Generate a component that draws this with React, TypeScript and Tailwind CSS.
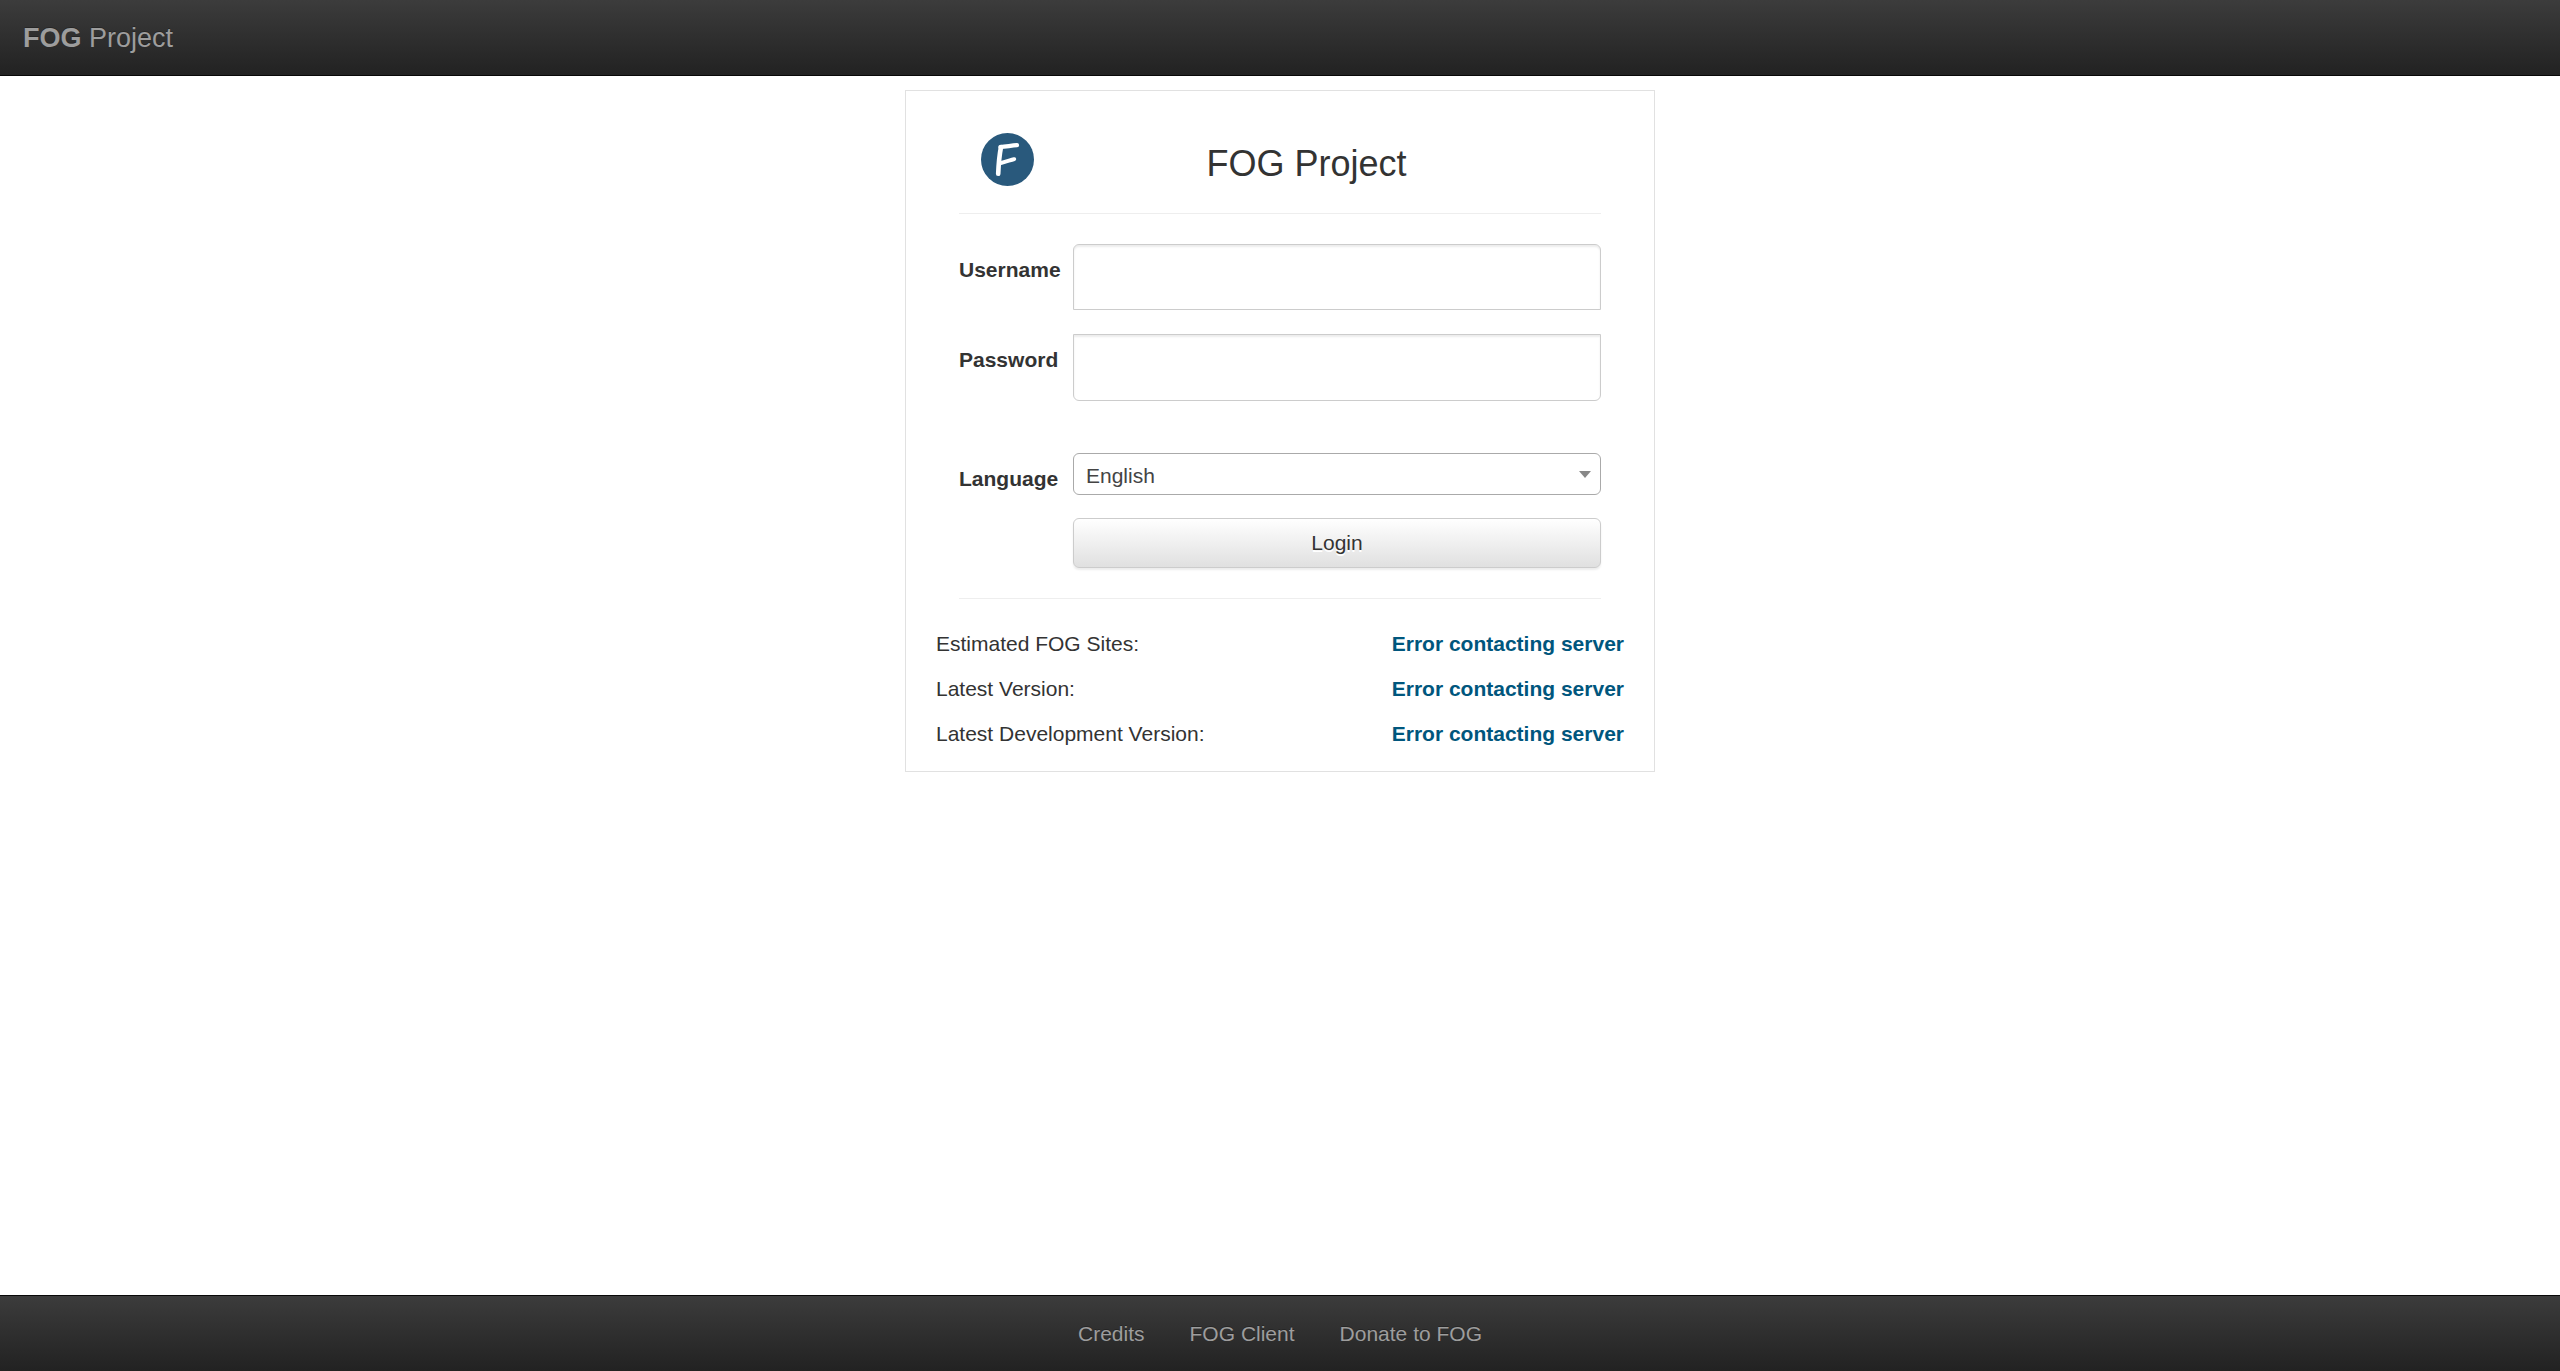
import type { ReactNode } from "react";

const fieldBase =
  "block w-full border border-[#cccccc] bg-white px-[18px] text-[21px] text-[#555555] shadow-[inset_0_2px_2px_rgba(0,0,0,0.075)] outline-none focus:border-[#66afe9]";

const footerLinks = ["Credits", "FOG Client", "Donate to FOG"];

const statuses = ["Estimated FOG Sites:", "Latest Version:", "Latest Development Version:"];

function Logo() {
  return (
    <svg className="size-[53px] shrink-0" viewBox="0 0 53 53" role="img" aria-label="FOG logo">
      <circle cx="26.5" cy="26.5" r="26.5" fill="#29597c" />
      <g fill="none" stroke="#ffffff" strokeLinecap="round" strokeLinejoin="round">
        <path d="M20 14C18.8 20 17.6 31 17.2 40.8" strokeWidth="4.6" />
        <path d="M19.4 14C25 13.6 30 12.6 36 12.1" strokeWidth="4.2" />
        <path d="M19.5 30.2C24 28.6 29 27.5 33.2 26.2" strokeWidth="4" />
      </g>
    </svg>
  );
}

function FormRow({ id, label, children }: { id: string; label: string; children: ReactNode }) {
  return (
    <div className="grid grid-cols-[114px_1fr] items-start">
      <label htmlFor={id} className="pt-[11px] font-bold">
        {label}
      </label>
      {children}
    </div>
  );
}

export default function App() {
  return (
    <div className="flex min-h-screen flex-col bg-white font-['Liberation_Sans',Arial,sans-serif] text-[21px] leading-[30px] text-[#333333]">
      <header className="flex h-[76px] items-center border-b border-[#080808] bg-linear-to-b from-[#3c3c3c] to-[#222222] px-[23px]">
        <a href="#" className="text-[27px] text-[#9d9d9d] [text-shadow:0_-1px_0_rgba(0,0,0,0.25)]">
          <b>FOG</b> Project
        </a>
      </header>

      <main className="flex-1 pt-[14px]">
        <div className="mx-auto max-w-[750px] border border-[#e1e1e1] bg-white pt-[42px] pb-[22px]">
          <form className="px-[53px]" onSubmit={(e) => e.preventDefault()}>
            <div className="mb-[18px] flex items-start px-[22px]">
              <Logo />
              <h1 className="flex-1 text-center text-[36px] leading-[62px]">FOG Project</h1>
            </div>
            <hr className="mb-[30px] border-[#eeeeee]" />
            <FormRow id="username" label="Username">
              <input id="username" type="text" className={`${fieldBase} h-[66px] rounded-t-[6px]`} />
            </FormRow>
            <div className="mt-6">
              <FormRow id="password" label="Password">
                <input id="password" type="password" className={`${fieldBase} h-[67px] rounded-b-[6px]`} />
              </FormRow>
            </div>
            <div className="mt-[52px]">
              <FormRow id="language" label="Language">
                <div className="relative">
                  <select
                    id="language"
                    className="block h-[42px] w-full appearance-none rounded-[6px] border border-[#aaaaaa] bg-white pt-1 pr-[30px] pl-3 text-[21px] text-[#444444]"
                  >
                    <option>English</option>
                  </select>
                  <svg
                    className="pointer-events-none absolute top-[18px] right-[10px] h-[7px] w-3"
                    viewBox="0 0 12 7"
                    aria-hidden="true"
                  >
                    <path d="M0 0H12L6 7Z" fill="#888888" />
                  </svg>
                </div>
              </FormRow>
            </div>
            <div className="mt-[23px] mb-[30px] pl-[114px]">
              <button
                type="submit"
                className="block h-[50px] w-full rounded-[6px] border border-[#cccccc] bg-linear-to-b from-white to-[#e0e0e0] text-[#333333] shadow-[0_2px_2px_rgba(0,0,0,0.075)] [text-shadow:0_2px_0_#ffffff]"
              >
                Login
              </button>
            </div>
            <hr className="mb-[30px] border-[#eeeeee]" />
          </form>
          <dl className="flex flex-col gap-[15px] px-[30px]">
            {statuses.map((s) => (
              <div key={s} className="flex justify-between">
                <dt>{s}</dt>
                <dd className="font-bold text-[#00567d]">Error contacting server</dd>
              </div>
            ))}
          </dl>
        </div>
      </main>

      <footer className="flex h-[76px] items-center justify-center border-t border-[#080808] bg-linear-to-b from-[#3c3c3c] to-[#222222]">
        <nav className="flex gap-[45px]">
          {footerLinks.map((l) => (
            <a key={l} href="#" className="text-[#9d9d9d] [text-shadow:0_-1px_0_rgba(0,0,0,0.25)]">
              {l}
            </a>
          ))}
        </nav>
      </footer>
    </div>
  );
}
